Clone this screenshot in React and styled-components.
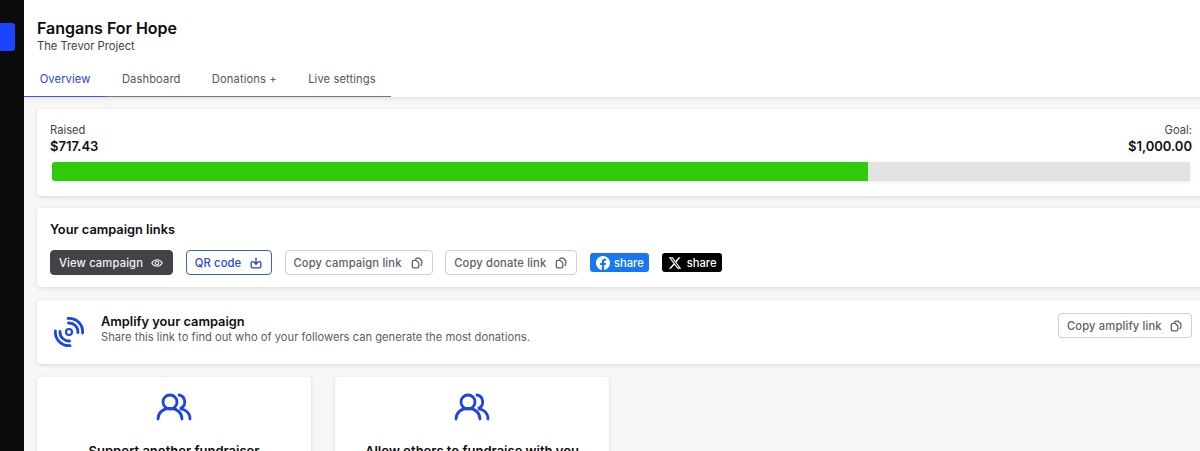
import React from "react";
import styled, { createGlobalStyle } from "styled-components";

const Global = createGlobalStyle`
  html, body { margin: 0; padding: 0; height: 451px; overflow: hidden; background: #f7f7f7; }
  body { font-family: Inter, "Liberation Sans", sans-serif; color: #0e0e10; }
  #root { height: 451px; }
`;

const Shell = styled.div`display: flex; width: 1200px; height: 451px; overflow: hidden;`;
const Sidebar = styled.aside`flex: 0 0 24px; background: #0b0b0b; padding-top: 23px;`;
const SideTab = styled.div`width: 15px; height: 28px; background: #1a44ff; border-radius: 0 3px 3px 0;`;
const Main = styled.main`flex: 0 0 1176px; min-width: 0; display: flex; flex-direction: column;`;
const Header = styled.header`height: 97px; background: #fff; box-shadow: 0 1px 4px rgba(0,0,0,.12); box-sizing: border-box; padding: 18px 0 0 13px; flex: none;`;
const Title = styled.h1`margin: 0; font-size: 16px; line-height: 20px; font-weight: 600; color: #0c0c0e;`;
const Subtitle = styled.div`font-size: 11.2px; line-height: 14px; color: #3f3f46; margin-top: 1px;`;
const Tabs = styled.nav`display: flex; width: 367px; height: 32px; margin: 12px 0 0 -13px; box-sizing: border-box; border-bottom: 1px solid #77777d;`;
const Tab = styled.a`
  box-sizing: border-box; height: 32px; padding: 7px 15.7px 0;
  font-size: 11.2px; line-height: 14px; letter-spacing: .1px; white-space: nowrap;
  color: ${p => p.$active ? "#1f45d8" : "#55555c"};
  border-bottom: 1px solid ${p => p.$active ? "#3b5be0" : "transparent"};
`;
const Content = styled.div`padding: 12px 0 0 13px; display: flex; flex-direction: column; width: 1168px; flex: none;`;
const Card = styled.section`
  background: #fff; border-radius: 4px; box-shadow: 0 1px 4px rgba(0,0,0,.13);
  box-sizing: border-box; height: ${p => p.$h}px; margin-bottom: ${p => p.$mb}px; flex: none;
`;
const RaisedCard = styled(Card)`padding: 14px 13px 0 13px;`;
const StatRow = styled.div`display: flex; justify-content: space-between;`;
const Stat = styled.div`text-align: ${p => p.$right ? "right" : "left"};`;
const StatLabel = styled.div`font-size: 11.2px; line-height: 14px; color: #46464d;`;
const StatValue = styled.div`font-size: 13px; line-height: 17px; font-weight: 600; color: #101014; margin-top: 1px;`;
const Track = styled.div`margin: 7px 2px 0 2px; height: 19px; background: #e2e2e4; border-radius: 2px; box-shadow: 0 1px 4px rgba(0,0,0,.08); overflow: hidden;`;
const Fill = styled.div`height: 100%; background: #2ecb0b; border-radius: 3px 0 0 3px;`;
const LinksCard = styled(Card)`padding: 14px 13px 0;`;
const CardTitle = styled.h2`margin: 0; font-size: 12.8px; line-height: 16px; font-weight: 600; color: #0e0e10;`;
const Buttons = styled.div`display: flex; align-items: center; gap: 12.75px; margin-top: 12px;`;
const Button = styled.button`
  box-sizing: border-box; height: 25px; padding: 0 9px 0 8px; display: inline-flex; align-items: center; justify-content: space-between;
  width: ${p => p.$w}px; flex: none; font: 500 11.2px/14px Inter, sans-serif; letter-spacing: .15px; border-radius: 4px; white-space: nowrap;
  background: ${p => p.$kind === "dark" ? "#434347" : "#fff"};
  color: ${p => p.$kind === "dark" ? "#f2f2f2" : p.$kind === "blue" ? "#2347d6" : "#606066"};
  border: 1px solid ${p => p.$kind === "dark" ? "#434347" : p.$kind === "blue" ? "#3b5fdc" : "#cfcfd2"};
`;
const Share = styled.a`
  box-sizing: border-box; height: 19px; width: ${p => p.$w}px; flex: none; display: inline-flex; align-items: center; gap: ${p => p.$gap}px; padding-left: ${p => p.$pl}px;
  border-radius: 3px; background: ${p => p.$bg}; color: #fff; font-size: 11.2px; font-weight: 500; line-height: 14px;
`;
const AmplifyCard = styled(Card)`display: flex; align-items: center; padding: 0 13px 0 17px;`;
const AmplifyText = styled.div`margin: 0 0 6px 17px; flex: 1;`;
const AmplifyDesc = styled.div`font-size: 11.2px; line-height: 14px; color: #5d5d64;`;
const AmplifyAction = styled.div`align-self: flex-start; margin-top: 13px;`;
const Grid = styled.div`display: flex; gap: 24px;`;
const ActionCard = styled(Card)`width: 274px; text-align: center; padding-top: 15px; height: 120px; margin: 0;`;
const ActionTitle = styled.h3`margin: 17px 0 0; font-size: 13px; line-height: 16px; font-weight: 600; color: #0e0e10;`;

const CopyIcon = () => (
  <svg width="12" height="12" viewBox="0 0 12 12" fill="none" stroke="currentColor" strokeWidth="1.3">
    <path d="M4.500 2.600A1.600 1.600 0 0 1 6 1.200h2.200l2.600 2.600V7a1.600 1.600 0 0 1-1.400 1.600" />
    <path d="M2.800 3.400h2.400l2.600 2.600v3.400a1.500 1.500 0 0 1-1.500 1.500H2.800a1.500 1.500 0 0 1-1.500-1.500V4.900a1.500 1.500 0 0 1 1.500-1.500z" />
  </svg>
);
const EyeIcon = () => (
  <svg width="12" height="12" viewBox="0 0 12 12" fill="none" stroke="currentColor" strokeWidth="1.1">
    <path d="M.8 6C2 3.800 3.800 2.700 6 2.700S10 3.800 11.200 6C10 8.200 8.200 9.300 6 9.300S2 8.200.8 6z" />
    <circle cx="6" cy="6" r="1.700" />
  </svg>
);
const DownloadIcon = () => (
  <svg width="12" height="12" viewBox="0 0 12 12" fill="none" stroke="currentColor" strokeWidth="1.3" strokeLinecap="round" strokeLinejoin="round">
    <path d="M6 1v6M3.900 5 6 7.200 8.100 5" />
    <path d="M3.200 4.600H2.400a1.200 1.200 0 0 0-1.200 1.200v3.600a1.400 1.400 0 0 0 1.400 1.400h6.800a1.400 1.400 0 0 0 1.400-1.400V5.800a1.200 1.200 0 0 0-1.200-1.200H8.800" />
  </svg>
);
const FacebookIcon = () => (
  <svg width="14" height="14" viewBox="0 0 24 24" fill="#fff">
    <path d="M24 12.070C24 5.400 18.630 0 12 0S0 5.400 0 12.070c0 6.030 4.390 11.020 10.130 11.930v-8.440H7.080v-3.490h3.050V9.410c0-3.020 1.790-4.690 4.530-4.690 1.310 0 2.680.24 2.680.24v2.970h-1.510c-1.490 0-1.960.93-1.960 1.880v2.260h3.330l-.53 3.490h-2.800V24C19.610 23.090 24 18.100 24 12.070z" />
  </svg>
);
const XIcon = () => (
  <svg width="14" height="14" viewBox="0 0 24 24" fill="#fff">
    <path d="M18.240 2.250h3.310l-7.230 8.260 8.500 11.240h-6.660l-5.210-6.820-5.970 6.820H1.680l7.730-8.840L1.250 2.250h6.830l4.710 6.230zm-1.160 17.520h1.830L7.080 4.130H5.120z" />
  </svg>
);
const BroadcastIcon = () => (
  <svg width="30" height="30" viewBox="0 0 30 30" fill="none" stroke="#1f45e0" strokeWidth="2.800" strokeLinecap="round">
    <circle cx="15" cy="15" r="3" strokeWidth="2.200" />
    <path d="M14 1.400A13.600 13.600 0 0 1 28.600 16" />
    <path d="M14.500 6A9 9 0 0 1 24 15.500" />
    <path d="M1.400 14A13.600 13.600 0 0 0 16 28.600" />
    <path d="M6 14.500A9 9 0 0 0 15.500 24" />
  </svg>
);
const UsersIcon = () => (
  <svg width="36" height="30" viewBox="0 0 36 30" fill="none" stroke="#1f45e0" strokeWidth="2.800" strokeLinecap="round">
    <circle cx="14" cy="10" r="7" />
    <path d="M2 27c0-6.500 5-10.500 12-10.500S26 20.500 26 27" />
    <path d="M23 3a7 7 0 0 1 1 13.500c6 1 10 5 10 10.500" />
  </svg>
);

export default function App() {
  const tabs = [
    { label: "Overview", active: true },
    { label: "Dashboard" },
    { label: "Donations +" },
    { label: "Live settings" },
  ];
  return (
    <>
      <Global />
      <Shell>
        <Sidebar><SideTab /></Sidebar>
        <Main>
          <Header>
            <Title>Fangans For Hope</Title>
            <Subtitle>The Trevor Project</Subtitle>
            <Tabs>
              {tabs.map(t => <Tab key={t.label} $active={t.active}>{t.label}</Tab>)}
            </Tabs>
          </Header>
          <Content>
            <RaisedCard $h={87} $mb={12}>
              <StatRow>
                <Stat><StatLabel>Raised</StatLabel><StatValue>$717.43</StatValue></Stat>
                <Stat $right><StatLabel>Goal:</StatLabel><StatValue>$1,000.00</StatValue></Stat>
              </StatRow>
              <Track><Fill style={{ width: `${717.43 / 1000 * 100}%` }} /></Track>
            </RaisedCard>
            <LinksCard $h={79} $mb={13}>
              <CardTitle>Your campaign links</CardTitle>
              <Buttons>
                <Button $kind="dark" $w={123}>View campaign <EyeIcon /></Button>
                <Button $kind="blue" $w={86}>QR code <DownloadIcon /></Button>
                <Button $w={148}>Copy campaign link <CopyIcon /></Button>
                <Button $w={132}>Copy donate link <CopyIcon /></Button>
                <Share $bg="#1877f2" $w={59} $pl={6} $gap={4}><FacebookIcon />share</Share>
                <Share $bg="#000" $w={60} $pl={6} $gap={5}><XIcon />share</Share>
              </Buttons>
            </LinksCard>
            <AmplifyCard $h={64} $mb={13}>
              <BroadcastIcon />
              <AmplifyText>
                <CardTitle>Amplify your campaign</CardTitle>
                <AmplifyDesc>Share this link to find out who of your followers can generate the most donations.</AmplifyDesc>
              </AmplifyText>
              <AmplifyAction><Button $w={134}>Copy amplify link <CopyIcon /></Button></AmplifyAction>
            </AmplifyCard>
            <Grid>
              <ActionCard><UsersIcon /><ActionTitle>Support another fundraiser</ActionTitle></ActionCard>
              <ActionCard><UsersIcon /><ActionTitle>Allow others to fundraise with you</ActionTitle></ActionCard>
            </Grid>
          </Content>
        </Main>
      </Shell>
    </>
  );
}
